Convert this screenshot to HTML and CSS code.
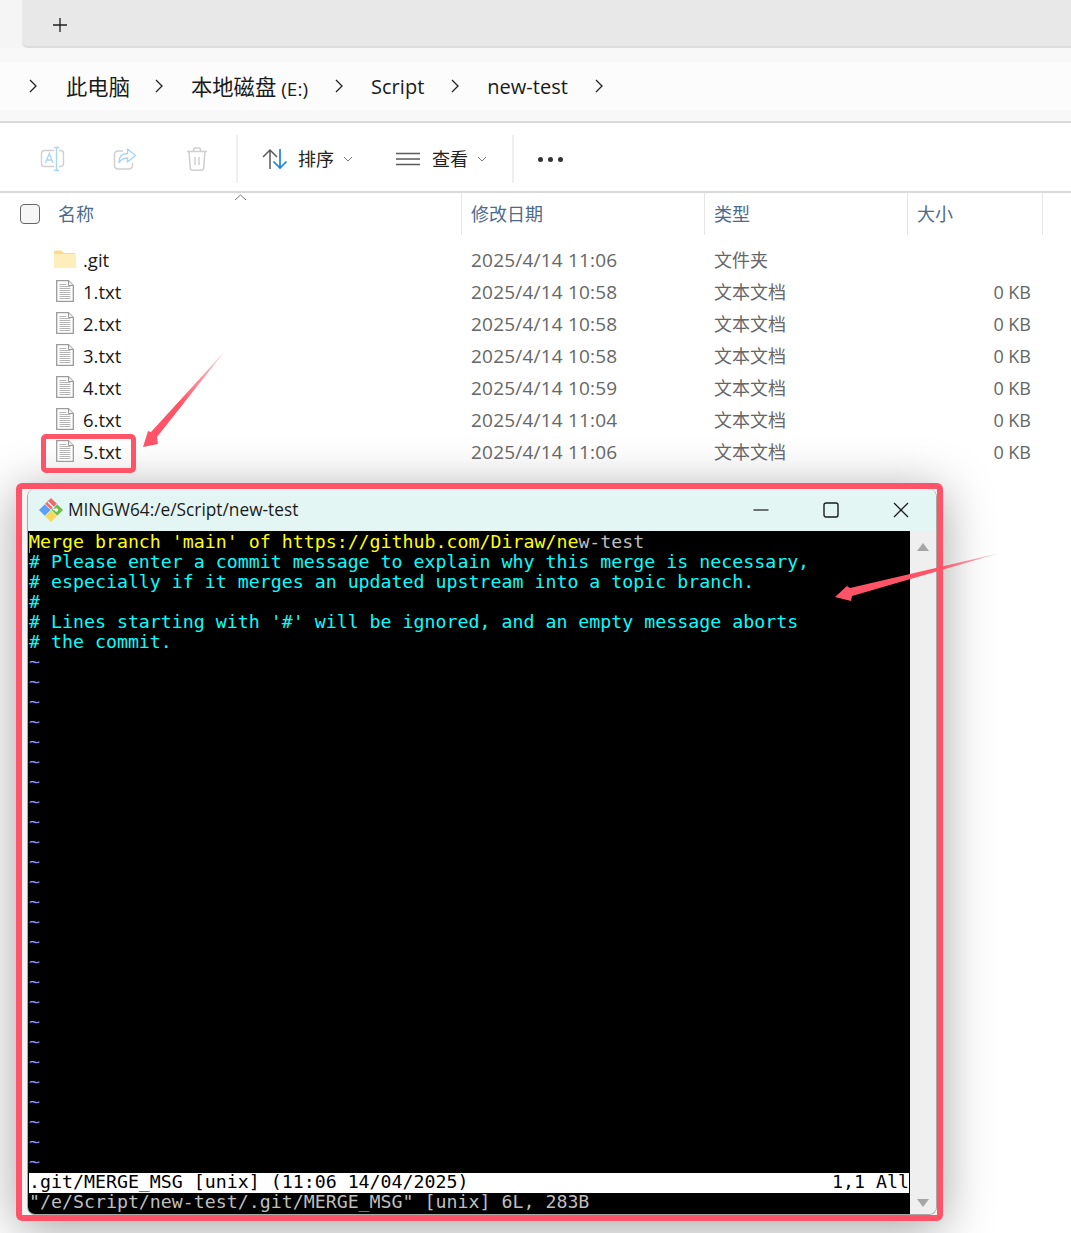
FILE: index.html
```html
<!DOCTYPE html>
<html lang="zh">
<head>
<meta charset="utf-8">
<title>new-test</title>
<link rel="stylesheet" href="styles.css">
</head>
<body>
<div class="page">
  <div class="explorer">
    <div class="tabbar">
      <div class="tabstrip">
        <svg class="plus" width="16" height="16" viewBox="0 0 16 16"><path d="M8 1v14M1 8h14" stroke="#1f1f1f" stroke-width="1.300" fill="none"/></svg>
      </div>
    </div>
    <div class="gapband"></div>
    <nav class="crumbs">
      <svg class="chev first" width="8" height="14" viewBox="0 0 8 14"><path d="M1 1l6 6-6 6" stroke="#222" stroke-width="1.3" fill="none"/></svg>
      <span class="crumb tight"><span class="cjk">此电脑</span></span>
      <svg class="chev" width="8" height="14" viewBox="0 0 8 14"><path d="M1 1l6 6-6 6" stroke="#222" stroke-width="1.3" fill="none"/></svg>
      <span class="crumb"><span class="cjk">本地磁盘</span><span class="paren"> (E:)</span></span>
      <svg class="chev" width="8" height="14" viewBox="0 0 8 14"><path d="M1 1l6 6-6 6" stroke="#222" stroke-width="1.3" fill="none"/></svg>
      <span class="crumb">Script</span>
      <svg class="chev" width="8" height="14" viewBox="0 0 8 14"><path d="M1 1l6 6-6 6" stroke="#222" stroke-width="1.3" fill="none"/></svg>
      <span class="crumb">new-test</span>
      <svg class="chev" width="8" height="14" viewBox="0 0 8 14"><path d="M1 1l6 6-6 6" stroke="#222" stroke-width="1.3" fill="none"/></svg>
    </nav>
    <div class="gapband small"></div>
    <div class="toolbar">
      <div class="tool-icons">
        <svg width="26" height="26" viewBox="0 0 26 26"><rect x="1.5" y="4.5" width="22" height="16" rx="3" fill="none" stroke="#cfcfcf" stroke-width="1.4"/><rect x="14" y="1" width="5" height="23" fill="#fff"/><path d="M16.5 1.5v23M14 1.5h5M14 24.500h5" stroke="#a9d4f5" stroke-width="1.4" fill="none"/><path d="M5.500 17L9.300 7.500 13 17M6.800 14h5" stroke="#a9d4f5" stroke-width="1.3" fill="none"/></svg>
        <svg width="26" height="26" viewBox="0 0 26 26"><path d="M11 5H6a3.500 3.500 0 0 0-3.500 3.500v11A3.500 3.500 0 0 0 6 23h11a3.500 3.500 0 0 0 3.500-3.500V17" stroke="#cfcfcf" stroke-width="1.5" fill="none"/><path d="M15.500 3l8 6.500-8 6.500v-4c-4 0-6.500 1.500-8.500 4.500 0-6 3.500-9 8.500-9z" stroke="#a9d4f5" stroke-width="1.4" fill="#fff" stroke-linejoin="round"/></svg>
        <svg width="26" height="26" viewBox="0 0 26 26"><path d="M3 5.500h20M9.500 5.500V4a2 2 0 0 1 2-2h3a2 2 0 0 1 2 2v1.500M5 5.500l1.300 16.500a2.500 2.500 0 0 0 2.500 2.300h8.400a2.500 2.500 0 0 0 2.500-2.300L21 5.500M11 11v8M15 11v8" stroke="#cfcfcf" stroke-width="1.5" fill="none"/></svg>
      </div>
      <div class="divider"></div>
      <div class="tool-btn sort">
        <svg width="26" height="22" viewBox="0 0 26 22"><path d="M8 21V2M1 9l7-7 7 7" stroke="#5a5a5a" stroke-width="1.5" fill="none"/><path d="M18 1v19M11.500 13.500l6.500 6.500 6.500-6.500" stroke="#1a86d8" stroke-width="1.7" fill="none"/></svg>
        <span class="tool-label">排序</span>
        <svg class="drop" width="10" height="6" viewBox="0 0 10 6"><path d="M1 1l4 4 4-4" stroke="#777" stroke-width="1" fill="none"/></svg>
      </div>
      <div class="tool-btn view">
        <svg width="24" height="14" viewBox="0 0 24 14"><path d="M0 1.500h24M0 7h24M0 12.500h24" stroke="#5a5a5a" stroke-width="1.5" fill="none"/></svg>
        <span class="tool-label">查看</span>
        <svg class="drop" width="10" height="6" viewBox="0 0 10 6"><path d="M1 1l4 4 4-4" stroke="#777" stroke-width="1" fill="none"/></svg>
      </div>
      <div class="divider"></div>
      <div class="dots"><i></i><i></i><i></i></div>
    </div>
    <div class="list-head">
      <div class="hcell name"><span class="check"></span><span>名称</span>
        <svg class="sort-caret" width="13" height="7" viewBox="0 0 13 7"><path d="M1 6l5.500-5L12 6" stroke="#777" stroke-width="1" fill="none"/></svg>
      </div>
      <div class="hcell">修改日期</div>
      <div class="hcell">类型</div>
      <div class="hcell">大小</div>
      <div class="hcell tail"></div>
    </div>
    <div class="rows">
      <div class="row"><div class="fname"><svg class="ficon" width="22" height="18" viewBox="0 0 22 18"><path d="M0 2a1.500 1.500 0 0 1 1.500-1.500h6L10 3h10.500A1.500 1.500 0 0 1 22 4.500V17a1 1 0 0 1-1 1H1a1 1 0 0 1-1-1z" fill="#f9dc8a"/><rect x="0" y="4" width="22" height="14" rx="1" fill="#fdeebc"/></svg><span>.git</span></div><div class="cell date">2025/4/14 11:06</div><div class="cell type">文件夹</div><div class="cell size"></div></div>
      <div class="row"><div class="fname"><svg class="ficon doc" width="18" height="22" viewBox="0 0 18 22"><use href="#doc"/></svg><span>1.txt</span></div><div class="cell date">2025/4/14 10:58</div><div class="cell type">文本文档</div><div class="cell size">0 KB</div></div>
      <div class="row"><div class="fname"><svg class="ficon doc" width="18" height="22" viewBox="0 0 18 22"><use href="#doc"/></svg><span>2.txt</span></div><div class="cell date">2025/4/14 10:58</div><div class="cell type">文本文档</div><div class="cell size">0 KB</div></div>
      <div class="row"><div class="fname"><svg class="ficon doc" width="18" height="22" viewBox="0 0 18 22"><use href="#doc"/></svg><span>3.txt</span></div><div class="cell date">2025/4/14 10:58</div><div class="cell type">文本文档</div><div class="cell size">0 KB</div></div>
      <div class="row"><div class="fname"><svg class="ficon doc" width="18" height="22" viewBox="0 0 18 22"><use href="#doc"/></svg><span>4.txt</span></div><div class="cell date">2025/4/14 10:59</div><div class="cell type">文本文档</div><div class="cell size">0 KB</div></div>
      <div class="row"><div class="fname"><svg class="ficon doc" width="18" height="22" viewBox="0 0 18 22"><use href="#doc"/></svg><span>6.txt</span></div><div class="cell date">2025/4/14 11:04</div><div class="cell type">文本文档</div><div class="cell size">0 KB</div></div>
      <div class="row"><div class="fname"><svg class="ficon doc" width="18" height="22" viewBox="0 0 18 22"><use href="#doc"/></svg><span>5.txt</span><div class="highlight"></div></div><div class="cell date">2025/4/14 11:06</div><div class="cell type">文本文档</div><div class="cell size">0 KB</div></div>
    </div>
  </div>

  <div class="frame">
    <div class="window">
      <div class="titlebar">
        <svg class="gitlogo" width="24" height="24" viewBox="0 0 24 24">
          <path d="M12 0l5.800 5.800-5.800 5.800-5.800-5.800z" fill="#f16a6a"/>
          <path d="M24 12l-5.800 5.800-5.800-5.800 5.800-5.800z" fill="#6fbe4a"/>
          <path d="M12 24l-5.800-5.800 5.800-5.800 5.800 5.800z" fill="#f7d85c"/>
          <path d="M0 12l5.800-5.800 5.800 5.800-5.800 5.800z" fill="#5d9ff2"/>
          <path d="M9 4l6 6M14 11.500l3 0" stroke="#fff" stroke-width="1.400"/>
          <circle cx="17.500" cy="12" r="1.700" fill="#fff"/>
        </svg>
        <span class="wintitle">MINGW64:/e/Script/new-test</span>
        <div class="winctl">
          <svg width="16" height="16" viewBox="0 0 16 16"><path d="M0.500 8h15" stroke="#1a1a1a" stroke-width="1.200"/></svg>
          <svg width="16" height="16" viewBox="0 0 16 16"><rect x="1" y="1" width="14" height="14" rx="2" fill="none" stroke="#1a1a1a" stroke-width="1.400"/></svg>
          <svg width="16" height="16" viewBox="0 0 16 16"><path d="M1 1l14 14M15 1L1 15" stroke="#1a1a1a" stroke-width="1.300"/></svg>
        </div>
      </div>
      <div class="winbody">
        <div class="term">
          <div class="line yellow cursor">Merge branch 'main' of https://github.com/Diraw/ne<span class="grey">w-test</span></div>
          <div class="line cyan"># Please enter a commit message to explain why this merge is necessary,</div>
          <div class="line cyan"># especially if it merges an updated upstream into a topic branch.</div>
          <div class="line cyan">#</div>
          <div class="line cyan"># Lines starting with '#' will be ignored, and an empty message aborts</div>
          <div class="line cyan"># the commit.</div>
          <div class="line blue">~</div><div class="line blue">~</div><div class="line blue">~</div><div class="line blue">~</div>
          <div class="line blue">~</div><div class="line blue">~</div><div class="line blue">~</div><div class="line blue">~</div>
          <div class="line blue">~</div><div class="line blue">~</div><div class="line blue">~</div><div class="line blue">~</div>
          <div class="line blue">~</div><div class="line blue">~</div><div class="line blue">~</div><div class="line blue">~</div>
          <div class="line blue">~</div><div class="line blue">~</div><div class="line blue">~</div><div class="line blue">~</div>
          <div class="line blue">~</div><div class="line blue">~</div><div class="line blue">~</div><div class="line blue">~</div>
          <div class="line blue">~</div><div class="line blue">~</div>
          <div class="line status"><span>.git/MERGE_MSG [unix] (11:06 14/04/2025)</span><span>1,1 All</span></div>
          <div class="line grey">"/e/Script/new-test/.git/MERGE_MSG" [unix] 6L, 283B</div>
        </div>
        <div class="scrollbar">
          <svg width="12" height="8" viewBox="0 0 12 8"><path d="M6 0l6 8H0z" fill="#a6a6a6"/></svg>
          <svg width="12" height="8" viewBox="0 0 12 8"><path d="M0 0h12L6 8z" fill="#a6a6a6"/></svg>
        </div>
      </div>
    </div>
  </div>

  <svg class="overlay" width="1071" height="1233" viewBox="0 0 1071 1233">
    <defs>
      <symbol id="doc" viewBox="0 0 18 22">
        <path d="M.7.700h11.800l4.800 4.800v15.800H.7z" fill="#fff" stroke="#9b9b9b" stroke-width="1.300"/>
        <path d="M12.500.700v4.800h4.800" fill="#eee" stroke="#9b9b9b" stroke-width="1"/>
        <path d="M3.500 4.500h7M3.500 6.500h11M3.500 8.500h11M3.500 10.500h11M3.500 12.500h11M3.500 14.500h11M3.500 16.500h11M3.500 18.500h11" stroke="#b5b5b5" stroke-width="1"/>
      </symbol>
      <linearGradient id="fade1" gradientUnits="userSpaceOnUse" x1="225" y1="351" x2="180" y2="404">
        <stop offset="0" stop-color="#ff5468" stop-opacity="0.25"/>
        <stop offset="1" stop-color="#ff5468"/>
      </linearGradient>
      <linearGradient id="fade2" gradientUnits="userSpaceOnUse" x1="1000" y1="553" x2="940" y2="570">
        <stop offset="0" stop-color="#ff5468" stop-opacity="0.25"/>
        <stop offset="1" stop-color="#ff5468"/>
      </linearGradient>
    </defs>
    <path d="M225 351L157 437l1 7-15 3 5-16 3 1z" fill="url(#fade1)"/>
    <path d="M1000 553L852 596l-1 5-16-4 12-11 3 2z" fill="url(#fade2)"/>
  </svg>
</div>
</body>
</html>
```

FILE: styles.css
```css
* { box-sizing: border-box; }
html, body { margin: 0; padding: 0; background: #fff; }
.page {
  position: relative;
  width: 1071px;
  height: 1233px;
  overflow: hidden;
  background: #fff;
  font-family: "Open Sans", "Noto Sans CJK SC", sans-serif;
  color: #1a1a1a;
}

/* explorer chrome */
.explorer { height: 483px; }
.tabbar { height: 48px; background: #f5f5f5; padding-left: 22px; }
.tabstrip {
  height: 48px;
  background: #e8e8e8;
  border-bottom: 2px solid #dcdcdc;
  border-bottom-left-radius: 6px;
  padding: 17px 0 0 30px;
}
.plus { display: block; }
.gapband { height: 14px; background: #f8f8f8; }
.gapband.small { height: 11px; }
.crumbs {
  height: 48px;
  background: #fcfcfc;
  display: flex;
  align-items: center;
  padding-left: 29px;
  font-size: 20px;
  letter-spacing: .02px;
}
.chev { flex: none; margin: 0 28px 0 0; }
.chev.first { margin-right: 29px; }
.crumb { margin-right: 27px; white-space: nowrap; }
.crumb.tight { margin-right: 25px; }
.cjk { font-size: 21.300px; vertical-align: 1px; }
.paren { font-size: 19px; }
.toolbar {
  height: 72px;
  border-top: 2px solid #d9d9d9;
  border-bottom: 2px solid #d9d9d9;
  padding-top: 4px;
  background: #fff;
  display: flex;
  align-items: center;
}
.tool-icons { display: flex; gap: 46px; padding-left: 40px; width: 236px; flex: none; }
.divider { width: 2px; height: 48px; background: #efefef; flex: none; }
.tool-btn { display: flex; align-items: center; flex: none; }
.sort { margin-left: 24px; width: 134px; }
.view { width: 116px; }
.tool-label { font-size: 18px; margin: -2px 0 0 12px; color: #222; }
.sort .tool-label { margin-left: 10px; }
.drop { margin-left: 9px; }
.dots { display: flex; gap: 5px; margin-left: 24px; }
.dots i { width: 5px; height: 5px; border-radius: 50%; background: #333; display: block; }

/* list */
.list-head {
  height: 42px;
  display: grid;
  grid-template-columns: 461px 243px 203px 135px 29px;
  font-size: 18px;
  color: #4c6a8c;
}
.hcell {
  border-left: 1px solid #e5e5e5;
  padding: 8px 0 0 9px;
  line-height: 26px;
}
.hcell.name { border-left: 0; padding-left: 20px; display: flex; gap: 18px; position: relative; align-items: flex-start; }
.check {
  width: 20px;
  height: 20px;
  margin-top: 3px;
  border: 1px solid #666;
  border-radius: 4px;
  background: #f6f6f6;
}
.sort-caret { position: absolute; left: 234px; top: 1px; }
.rows { padding-top: 9px; }
.row {
  height: 32px;
  display: grid;
  grid-template-columns: 461px 243px 203px 135px;
  align-items: center;
  font-size: 18.500px;
}
.fname { display: flex; align-items: center; padding-left: 54px; position: relative; color: #1a1a1a; margin-top: -2px; }
.ficon { flex: none; }
.ficon.doc { margin: 0 9px 0 2px; }
.ficon:not(.doc) { margin-right: 7px; }
.cell { padding-left: 10px; color: #666; white-space: nowrap; }
.date { font-size: 19px; letter-spacing: .2px; }
.type { font-size: 18px; margin-top: -2px; }
.size { text-align: right; padding-right: 11px; font-size: 18px; }
.highlight {
  position: absolute;
  left: 41px;
  top: -5px;
  width: 95px;
  height: 39px;
  border: 5px solid #ff5468;
  border-radius: 5px;
}

/* terminal window */
.frame {
  margin-left: 16px;
  width: 927px;
  height: 738px;
  border: 6px solid #ff5468;
  border-radius: 6px;
  background: #f4f4f4;
  padding-left: 5px;
  box-shadow: 0 8px 50px rgba(0, 0, 0, .36);
}
.window {
  height: 726px;
  border: 1px solid #a8a8a8;
  border-top: 0;
  border-radius: 8px;
  overflow: hidden;
  background: #f0f0f0;
}
.titlebar {
  height: 42px;
  background: #e4f6f4;
  display: flex;
  align-items: center;
  padding-left: 11px;
}
.gitlogo { flex: none; margin-right: 5px; }
.wintitle { font-size: 17.300px; color: #1a1a1a; white-space: nowrap; margin-top: -2px; }
.winctl { margin-left: auto; display: flex; gap: 54px; padding-right: 27px; }
.winbody { display: flex; height: 683px; }
.term {
  width: 882px;
  flex: none;
  background: #000;
  padding: 2px 0 0 1px;
  font-family: "DejaVu Sans Mono", "Liberation Mono", monospace;
  font-size: 18.250px;
}
.line { height: 20px; line-height: 18px; white-space: pre; }
.yellow { color: #ffff00; }
.cyan { color: #00ffff; }
.blue { color: #8c8cff; }
.grey { color: #bfbfbf; }
.cursor { box-shadow: inset 1px 0 0 #999; }
.status {
  background: #fff;
  color: #000;
  display: flex;
  justify-content: space-between;
  margin-right: 1px;
}
.scrollbar {
  flex: 1;
  background: #efefef;
  display: flex;
  flex-direction: column;
  justify-content: space-between;
  align-items: center;
  padding: 12px 0 7px;
}
.overlay { position: absolute; left: 0; top: 0; pointer-events: none; }
```
